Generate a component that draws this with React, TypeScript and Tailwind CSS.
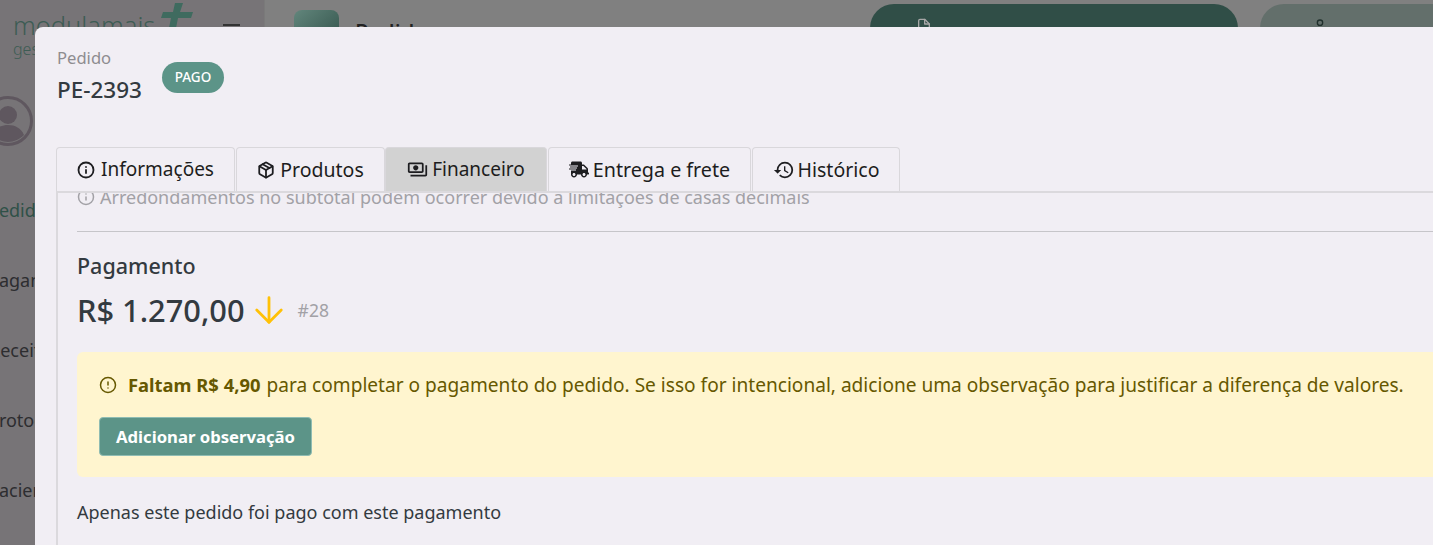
import { FaShippingFast } from "react-icons/fa";
import { FiAlertCircle, FiFile, FiInfo, FiPackage, FiUser } from "react-icons/fi";
import { LuArrowDown } from "react-icons/lu";
import { MdHistory, MdOutlinePayments } from "react-icons/md";

const tabs = [
  { label: "Informações", icon: <FiInfo className="h-[18px] w-[18px]" strokeWidth={2.4} />, className: "w-[179px] gap-[6px] text-[19px]" },
  { label: "Produtos", icon: <FiPackage className="h-[18px] w-[18px]" strokeWidth={2.4} />, className: "ml-px w-[149px] gap-[5px] text-[19.5px]" },
  { label: "Financeiro", icon: <MdOutlinePayments className="h-[21px] w-[21px]" />, className: "w-[162px] gap-[4px] text-[19px] border-[#d2d2d2] bg-[#d2d2d2]" },
  { label: "Entrega e frete", icon: <FaShippingFast className="h-[17px] w-[20px]" />, className: "ml-px w-[203px] gap-[4px] text-[19.7px]" },
  { label: "Histórico", icon: <MdHistory className="h-[22px] w-[22px]" />, className: "ml-px w-[148px] gap-[3px] text-[19.5px]" },
];

const navItems = [
  { label: "Pedidos", className: "text-[#2f5148] -ml-[25px]" },
  { label: "Pagamentos", className: "-ml-[25px] mt-[46px]" },
  { label: "Receitas", className: "-ml-[24px] mt-[46px]" },
  { label: "Protocolos", className: "-ml-[25px] mt-[46px]" },
  { label: "Pacientes", className: "-ml-[25px] mt-[46px]" },
];

const App = () => {
  return (
    <div className="relative h-[545px] w-[1433px] overflow-hidden bg-[#808080] font-['Noto_Sans',sans-serif]">
      {/* page behind the modal */}
      <div className="flex h-full">
        <aside className="h-full w-[265px] shrink-0 border-r border-[#7a7a7a] bg-[#777477] pl-[13px] pt-[3px]">
          <div className="flex h-[36px] items-start">
            <span className="mt-[6px] text-[25.5px] font-light leading-8 text-[#3d5c54]">modulamais</span>
            <svg viewBox="0 0 32 30" className="ml-[6px] h-[30px] w-[32px] text-[#3f6b5f]" fill="currentColor">
              <path d="M14 0h8l-3 9h13l-2 6H17l-3 15H7l3-15H0l2-6h10z" />
            </svg>
            <div className="ml-[30px] mt-[21px] h-[2px] w-[17px] bg-[#333]" />
          </div>
          <div className="text-[16px] font-light leading-5 text-[#3d5c54]">gestão</div>
          <svg viewBox="0 0 50 50" className="-ml-[30px] mt-[37px] h-[50px] w-[50px] text-[#5f575f]" fill="currentColor">
            <circle cx="25" cy="25" r="23.5" fill="none" stroke="currentColor" strokeWidth="3" />
            <circle cx="25" cy="19" r="9" />
            <path d="M9 39c3-7 9-10 16-10s13 3 16 10c-4 4-10 7-16 7s-12-3-16-7z" />
          </svg>
          <nav className="mt-[52px] text-[18px] leading-6 text-[#2d2d30]">
            {navItems.map((item) => (
              <div key={item.label} className={item.className}>
                {item.label}
              </div>
            ))}
          </nav>
        </aside>
        <main className="flex flex-1 items-start pl-[29px] pt-[10px]">
          <div className="h-[40px] w-[45px] rounded-lg bg-gradient-to-br from-[#62867c] to-[#2f4f47]" />
          <span className="ml-[16px] mt-[5px] w-[515px] text-[22px] font-medium text-[#222]">Pedidos</span>
          <div className="mt-[-6px] flex h-[50px] w-[368px] shrink-0 justify-center rounded-[24px] bg-[#304e47] pr-[260px] pt-[14px]">
            <FiFile className="h-[16px] w-[16px] shrink-0 text-[#a8a8a8]" />
          </div>
          <div className="ml-[22px] mt-[-6px] flex h-[50px] w-[220px] shrink-0 justify-center rounded-[24px] bg-[#636f6b] pr-[100px] pt-[14px]">
            <FiUser className="h-[16px] w-[16px] shrink-0 text-[#1f2f2b]" />
          </div>
        </main>
      </div>

      {/* modal */}
      <div className="absolute bottom-[-20px] left-[35px] right-[-20px] top-[27px] flex flex-col rounded-tl-lg bg-[#f1eef4]">
        <header className="flex h-[120px] shrink-0 items-start pl-[22px]">
          <div className="pt-[21px]">
            <div className="text-[16.6px] leading-5 text-[#8e8c90]">Pedido</div>
            <div className="mt-[10px] text-[22.5px] font-medium leading-6 text-[#333a40]">PE-2393</div>
          </div>
          <span className="ml-[20px] mt-[35px] flex h-[31px] w-[62px] items-center justify-center rounded-full bg-[#5c9488] text-[13.5px] font-medium text-white">
            PAGO
          </span>
        </header>

        <div className="flex shrink-0 pl-[21px]">
          {tabs.map((tab) => (
            <button
              key={tab.label}
              type="button"
              className={`flex h-[44px] items-center justify-center rounded-t border border-b-0 border-[#d9d7db] text-[#1d1d20] ${tab.className}`}
            >
              {tab.icon}
              {tab.label}
            </button>
          ))}
        </div>

        <section className="ml-[21px] min-h-0 flex-1 overflow-hidden border-l-2 border-t-2 border-[#dbd9dd] pl-[19px]">
          <p className="-mt-[7px] flex items-center gap-[5px] whitespace-nowrap text-[18px] leading-[22px] text-[#a2a1a6]">
            <FiInfo className="h-[18px] w-[18px]" />
            Arredondamentos no subtotal podem ocorrer devido a limitações de casas decimais
          </p>
          <hr className="mt-[23px] border-[#c6c5c9]" />
          <h2 className="mt-[22px] text-[21.5px] font-medium leading-6 text-[#333a40]">Pagamento</h2>
          <div className="mt-[14px] flex h-[36px] items-center">
            <span className="text-[30.8px] font-medium leading-9 text-[#333a40]">R$ 1.270,00</span>
            <LuArrowDown className="ml-[3px] h-[42px] w-[42px] text-[#ffc107]" strokeWidth={1.6} />
            <span className="ml-[8px] text-[17.5px] text-[#a2a1a6]">#28</span>
          </div>
          <div className="mt-[24px] h-[125px] rounded-md bg-[#fff5cf] pl-[22px] pt-[21px] text-[#665800]">
            <p className="flex items-center whitespace-nowrap text-[19.1px] leading-6">
              <FiAlertCircle className="mr-[11px] h-[18px] w-[18px]" />
              <strong className="text-[18.4px] font-bold">Faltam R$ 4,90</strong>
              <span className="ml-[6px]">
                para completar o pagamento do pedido. Se isso for intencional, adicione uma observação para justificar
                a diferença de valores.
              </span>
            </p>
            <button
              type="button"
              className="mt-[20px] flex h-[39px] w-[213px] items-center justify-center rounded border border-[#8fbcb3] bg-[#5c9488] text-[16.7px] font-bold text-white"
            >
              Adicionar observação
            </button>
          </div>
          <p className="mt-[23px] text-[18px] leading-6 text-[#333a40]">Apenas este pedido foi pago com este pagamento</p>
        </section>
      </div>
    </div>
  );
};

export default App;
